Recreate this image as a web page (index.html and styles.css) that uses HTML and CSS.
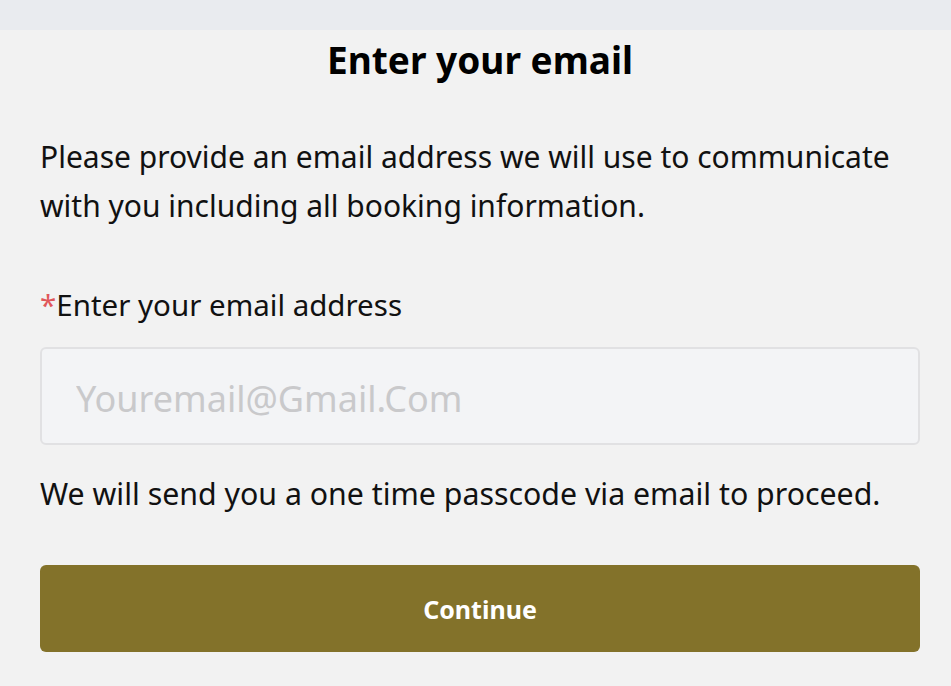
FILE: index.html
```html
<!DOCTYPE html>
<html lang="en">
<head>
<meta charset="utf-8">
<link rel="stylesheet" href="styles.css">
</head>
<body>
<div class="topbar"></div>
<main class="page">
  <h1 class="title">Enter your email</h1>
  <p class="intro">Please provide an email address we will use to communicate with you including all booking information.</p>
  <label class="label" for="email"><span class="req">*</span>Enter your email address</label>
  <input class="input" id="email" type="email" placeholder="Youremail@Gmail.Com">
  <p class="hint">We will send you a one time passcode via email to proceed.</p>
  <button class="btn" type="button">Continue</button>
</main>
</body>
</html>
```
FILE: styles.css
```css
* { box-sizing: border-box; }
html, body { margin: 0; padding: 0; }
body {
  background: #f2f2f2;
  font-family: "Noto Sans", "Open Sans", sans-serif;
  color: #111;
  width: 951px;
  height: 686px;
  overflow: hidden;
}
.topbar {
  height: 30px;
  background: #e9ebef;
}
.page {
  padding: 0 31px 0 40px;
  display: flex;
  flex-direction: column;
}
.title {
  margin: 8px 0 0;
  text-align: center;
  font-size: 37px;
  line-height: 44px;
  font-weight: 700;
  color: #000;
}
.intro {
  margin: 50px 0 0;
  font-size: 30px;
  line-height: 49px;
}
.label {
  margin-top: 55px;
  font-size: 29.5px;
  line-height: 40px;
}
.req { color: #e0575b; }
.input {
  margin-top: 22px;
  height: 98px;
  border: 2px solid #e1e1e3;
  border-radius: 6px;
  background: #f3f4f6;
  padding: 5px 34px 0;
  font-family: inherit;
  font-size: 36px;
  color: #111;
  outline: none;
}
.input::placeholder { color: #c9c9cb; }
.hint {
  margin: 29px 0 0;
  font-size: 30.3px;
  line-height: 40px;
}
.btn {
  margin-top: 51px;
  height: 87px;
  border: none;
  border-radius: 6px;
  background: #83722a;
  color: #fff;
  font-family: inherit;
  font-size: 25px;
  font-weight: 700;
}
```
